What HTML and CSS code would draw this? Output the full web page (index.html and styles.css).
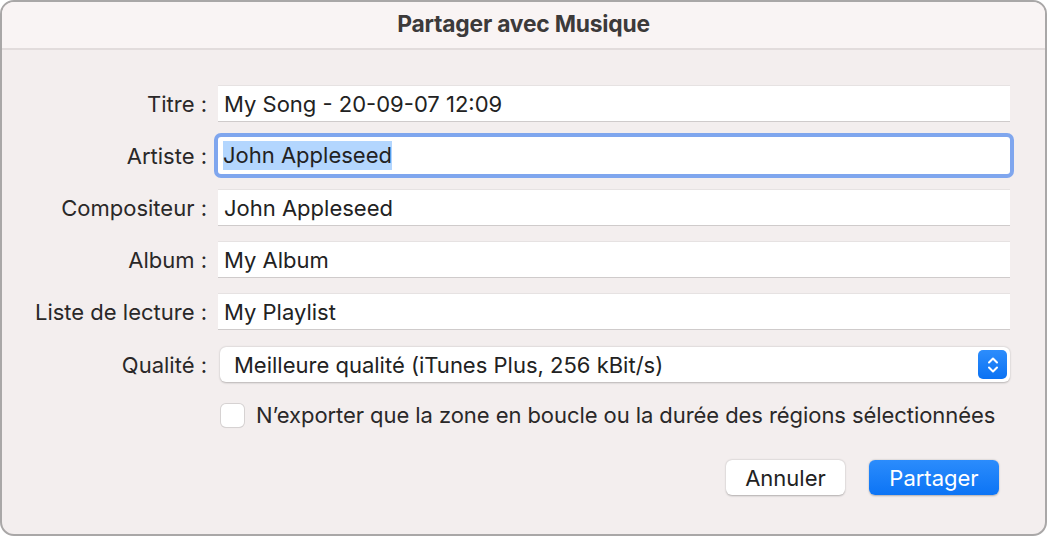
FILE: index.html
```html
<!DOCTYPE html>
<html lang="fr">
<head>
<meta charset="utf-8">
<title>Partager avec Musique</title>
<link rel="stylesheet" href="styles.css">
</head>
<body>
<div class="window">
  <div class="titlebar">Partager avec Musique</div>
  <div class="content">
    <div class="form">
      <label class="label">Titre :</label>
      <div class="field">My Song - 20-09-07 12:09</div>

      <label class="label">Artiste :</label>
      <div class="field focused"><span class="sel">John Appleseed</span></div>

      <label class="label">Compositeur :</label>
      <div class="field">John Appleseed</div>

      <label class="label">Album :</label>
      <div class="field">My Album</div>

      <label class="label">Liste de lecture :</label>
      <div class="field">My Playlist</div>

      <label class="label label-popup">Qualité :</label>
      <div class="popup">
        <span class="popup-text">Meilleure qualité (iTunes Plus, 256 kBit/s)</span>
        <span class="stepper">
          <svg width="14" height="20" viewBox="0 0 14 20"><path d="M3 7.5 L7 3.5 L11 7.5" fill="none" stroke="#fff" stroke-width="2" stroke-linecap="round" stroke-linejoin="round"/><path d="M3 12.5 L7 16.5 L11 12.5" fill="none" stroke="#fff" stroke-width="2" stroke-linecap="round" stroke-linejoin="round"/></svg>
        </span>
      </div>

      <span></span>
      <div class="check-row">
        <span class="checkbox"></span>
        <span class="check-label">N’exporter que la zone en boucle ou la durée des régions sélectionnées</span>
      </div>
    </div>
    <div class="buttons">
      <button class="btn">Annuler</button>
      <button class="btn primary">Partager</button>
    </div>
  </div>
</div>
</body>
</html>
```
FILE: styles.css
```css
* { box-sizing: border-box; }
html, body {
  margin: 0;
  padding: 0;
  background: #ffffff;
}
body {
  font-family: Inter, "Open Sans", "Liberation Sans", sans-serif;
  color: #262626;
}
.window {
  width: 1047px;
  height: 536px;
  border: 2px solid #a9a7a7;
  border-radius: 14px;
  overflow: hidden;
  background: #f3eeee;
  display: flex;
  flex-direction: column;
}
.titlebar {
  height: 48px;
  flex: none;
  background: #f9f4f4;
  border-bottom: 2px solid #e2dcdc;
  display: flex;
  align-items: center;
  justify-content: center;
  font-size: 22.8px;
  font-weight: 700;
  color: #3c3a3a;
  letter-spacing: -0.2px;
  padding-bottom: 3px;
}
.content {
  flex: 1;
  padding: 35px 35px 0 0;
}
.form {
  display: grid;
  grid-template-columns: 205px 1fr;
  column-gap: 11px;
  row-gap: 15px;
  align-items: center;
}
.label {
  text-align: right;
  font-size: 22px;
  color: #2a2828;
  white-space: nowrap;
}
.field {
  height: 37px;
  background: #ffffff;
  border-top: 1px solid #e6e2e2;
  border-bottom: 1px solid #cfcbcb;
  display: flex;
  align-items: center;
  padding-left: 6px;
  font-size: 22px;
  color: #222;
  white-space: nowrap;
}
.field.focused {
  border: none;
  box-shadow: 0 0 0 4px #7fa6ee;
  border-radius: 3px;
  padding-left: 5px;
}
.sel {
  background: #b3d6fe;
  padding: 1px 0 2px;
}
.label-popup {
  margin-top: 2px;
}
.popup {
  margin-top: 2px;
  margin-left: 2px;
  height: 35px;
  background: #ffffff;
  border-radius: 6px;
  box-shadow: 0 0.5px 2px rgba(0,0,0,0.25);
  display: flex;
  align-items: center;
  justify-content: space-between;
  padding: 0 3px 0 14px;
  font-size: 22px;
  color: #222;
}
.stepper {
  width: 29px;
  height: 29px;
  border-radius: 5px;
  background: linear-gradient(#2d8dfc, #0b72f3);
  display: flex;
  align-items: center;
  justify-content: center;
}
.check-row {
  margin-top: 5px;
  display: flex;
  align-items: center;
  gap: 12px;
  padding-left: 3px;
}
.checkbox {
  width: 23px;
  height: 23px;
  background: #ffffff;
  border-radius: 5px;
  box-shadow: 0 0 0 1px #d6d2d2, 0 0.5px 1px rgba(0,0,0,0.1);
}
.check-label {
  font-size: 22px;
  color: #2a2828;
  white-space: nowrap;
  letter-spacing: -0.07px;
}
.buttons {
  display: flex;
  justify-content: flex-end;
  gap: 24px;
  margin-top: 32px;
  padding-right: 11px;
}
.btn {
  font-family: inherit;
  height: 35px;
  border: none;
  border-radius: 6px;
  font-size: 22px;
  background: #ffffff;
  color: #222;
  box-shadow: 0 0.5px 2px rgba(0,0,0,0.28);
  width: 119px;
  padding: 0;
}
.btn.primary {
  width: 130px;
  color: #ffffff;
  background: linear-gradient(#2b8cfc, #0c74f5);
}
```
